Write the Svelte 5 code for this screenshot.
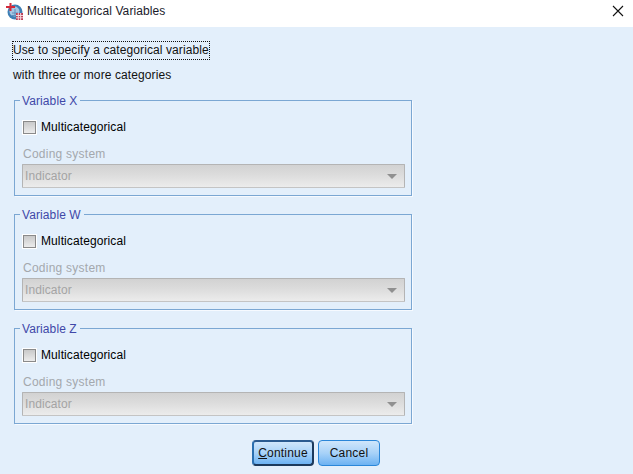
<script>
  const groups = ["Variable X", "Variable W", "Variable Z"];
</script>

<div class="window">
  <div class="titlebar">
    <svg class="appicon" width="17" height="17" viewBox="0 0 17 17">
      <circle cx="9" cy="9" r="7.5" fill="#3f7fb5" />
      <circle cx="8.5" cy="8.5" r="5" fill="#a5c6e4" />
      <path d="M6 10h6M6 12.5h4M9 6v6" stroke="#5f8fbc" stroke-width="1" />
      <rect x="0" y="3" width="9" height="2" fill="#d32a3a" />
      <rect x="3.5" y="0" width="2" height="8" fill="#d32a3a" />
      <rect x="10" y="10" width="7" height="7" fill="#bb3f58" />
      <path d="M10 12.5h7M10 14.8h7M12.3 10v7M14.6 10v7" stroke="#f3d6dc" stroke-width="1" />
    </svg>
    <span class="title">Multicategorical Variables</span>
    <svg class="close" width="12" height="12" viewBox="0 0 12 12">
      <path d="M1 1l10 10M11 1L1 11" stroke="#111" stroke-width="1.1" fill="none" />
    </svg>
  </div>

  <div class="body">
    <div class="intro">
      <span class="focused">Use to specify a categorical variable</span>
      <span class="second">with three or more categories</span>
    </div>

    {#each groups as name}
      <fieldset>
        <legend>{name}</legend>
        <label class="check">
          <span class="box"></span>
          Multicategorical
        </label>
        <div class="coding">Coding system</div>
        <div class="select">
          <span>Indicator</span>
          <span class="arrow"></span>
        </div>
      </fieldset>
    {/each}

    <div class="buttons">
      <button class="default"><u>C</u>ontinue</button>
      <button>Cancel</button>
    </div>
  </div>
</div>

<style>
  :global(body) {
    margin: 0;
    background: #e3effb;
  }

  .window {
    width: 633px;
    height: 474px;
    overflow: hidden;
    font-family: "Liberation Sans", Arial, sans-serif;
    font-size: 12px;
    letter-spacing: 0.1px;
    color: #111;
  }

  .titlebar {
    height: 27px;
    box-sizing: border-box;
    background: #fff;
    display: flex;
    align-items: center;
    padding: 0 9px 5px 6px;
  }

  .appicon {
    margin-right: 4px;
  }

  .title {
    flex: 1;
    color: #1a1a2a;
  }

  .body {
    height: 447px;
    background: #e3effb;
    padding: 14px 0 0 12px;
    box-sizing: border-box;
  }

  .intro {
    display: flex;
    flex-direction: column;
    align-items: flex-start;
  }

  .focused {
    border: 1px dotted #111;
    padding: 1px 0 2px 0;
    line-height: 14px;
  }

  .second {
    margin: 8px 0 0 1px;
    line-height: 14px;
  }

  fieldset {
    width: 398px;
    height: 103px;
    box-sizing: border-box;
    margin: 0 0 11px 2px;
    padding: 0 6px 0 7px;
    border: 1px solid #7ba7d3;
    box-shadow: 1px 1px 0 #f6faff;
  }

  .intro + fieldset {
    margin-top: 11px;
  }

  legend {
    color: #3f48a8;
    padding: 1px 3px 0 2px;
    margin-left: -2px;
    line-height: 14px;
  }

  .check {
    display: flex;
    align-items: center;
    gap: 5px;
    height: 14px;
    margin-top: 12px;
    color: #000;
  }

  .box {
    width: 11px;
    height: 11px;
    border: 1px solid #8a8a8a;
    outline: 1px solid #fff;
    background: linear-gradient(#c9c9c9, #ececec);
    margin-left: 1px;
  }

  .coding {
    color: #a4a8ad;
    letter-spacing: 0.25px;
    margin-top: 13px;
    margin-left: 1px;
    line-height: 14px;
  }

  .select {
    margin-top: 3px;
    height: 24px;
    box-sizing: border-box;
    border: 1px solid #b4b4b4;
    border-bottom-color: #c4c4c4;
    border-radius: 1px;
    background: linear-gradient(#d2d2d2, #dcdcdc 45%, #ececec);
    color: #a4a4a4;
    display: flex;
    align-items: center;
    justify-content: space-between;
    padding: 0 7px 0 2px;
  }

  .arrow {
    width: 0;
    height: 0;
    border-left: 5px solid transparent;
    border-right: 5px solid transparent;
    border-top: 5px solid #909090;
  }

  .buttons {
    display: flex;
    justify-content: flex-start;
    gap: 4px;
    margin: 16px 0 0 240px;
  }

  button {
    width: 62px;
    height: 26px;
    padding: 0;
    font: inherit;
    letter-spacing: 0.2px;
    color: #111;
    border: 1px solid #2a86d8;
    border-radius: 4px;
    background: linear-gradient(#cfe6fb, #a8d2f8 50%, #6cb2f2);
  }

  button.default {
    border: 2px solid #1c3a5c;
    border-left-color: #2a6fb0;
    border-top-color: #2a5a90;
  }
</style>
